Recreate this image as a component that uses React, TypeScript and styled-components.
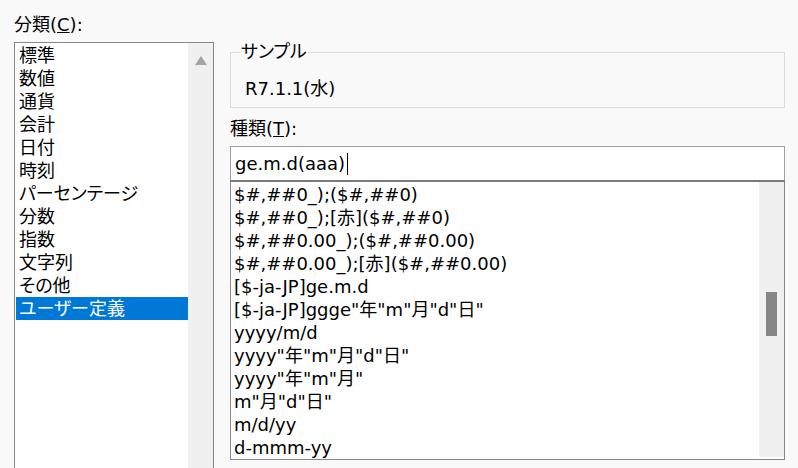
import styled, { createGlobalStyle } from 'styled-components'

const GlobalStyle = createGlobalStyle`
  html, body {
    margin: 0;
    padding: 0;
    background: #f9f9f9;
    width: 798px;
    height: 468px;
    overflow: hidden;
  }
  body {
    font-family: "DejaVu Sans", "Noto Sans CJK JP", sans-serif;
    font-feature-settings: "palt";
    font-size: 18px;
    color: #000;
  }
`

const categories = [
  '標準',
  '数値',
  '通貨',
  '会計',
  '日付',
  '時刻',
  'パーセンテージ',
  '分数',
  '指数',
  '文字列',
  'その他',
  'ユーザー定義',
]

const formats = [
  '$#,##0_);($#,##0)',
  '$#,##0_);[赤]($#,##0)',
  '$#,##0.00_);($#,##0.00)',
  '$#,##0.00_);[赤]($#,##0.00)',
  '[$-ja-JP]ge.m.d',
  '[$-ja-JP]ggge"年"m"月"d"日"',
  'yyyy/m/d',
  'yyyy"年"m"月"d"日"',
  'yyyy"年"m"月"',
  'm"月"d"日"',
  'm/d/yy',
  'd-mmm-yy',
]

export default function App() {
  return (
    <>
      <GlobalStyle />
      <Page>
        <LeftColumn>
          <Label>
            分類(<u>C</u>):
          </Label>
          <CategoryBox>
            <Items>
              {categories.map((c, i) => (
                <CategoryItem key={c} $selected={i === categories.length - 1}>
                  {c}
                </CategoryItem>
              ))}
            </Items>
            <ScrollTrack>
              <UpArrow viewBox="0 0 12 9" width="12" height="9">
                <polygon points="6,0 12,9 0,9" fill="#a3a3a3" />
              </UpArrow>
            </ScrollTrack>
          </CategoryBox>
        </LeftColumn>

        <RightColumn>
          <SampleGroup>
            <Legend>サンプル</Legend>
            <SampleText>R7.1.1(水)</SampleText>
          </SampleGroup>
          <TypeLabel>
            種類(<u>T</u>):
          </TypeLabel>
          <FormatInput>
            ge.m.d(aaa)
            <Caret />
          </FormatInput>
          <FormatBox>
            <Items>
              {formats.map((f) => (
                <FormatItem key={f}>{f}</FormatItem>
              ))}
            </Items>
            <FormatTrack>
              <Thumb />
            </FormatTrack>
          </FormatBox>
        </RightColumn>
      </Page>
    </>
  )
}

const Page = styled.div`
  display: grid;
  grid-template-columns: 200px 555px;
  column-gap: 16px;
  padding: 0 0 0 14px;
  height: 468px;
  box-sizing: border-box;
`

const LeftColumn = styled.div`
  display: flex;
  flex-direction: column;
`

const Label = styled.div`
  line-height: 22px;
  margin-top: 14px;
  margin-bottom: 6px;
  white-space: nowrap;
`

const CategoryBox = styled.div`
  display: flex;
  border: 1px solid #828790;
  border-bottom: none;
  background: #fff;
  height: 440px;
  box-sizing: border-box;
  padding: 1px 0 0 1px;
`

const Items = styled.div`
  flex: 1;
  display: flex;
  flex-direction: column;
  min-width: 0;
`

const CategoryItem = styled.div<{ $selected?: boolean }>`
  height: 23px;
  line-height: 23px;
  padding-left: 3px;
  white-space: nowrap;
  background: ${(p) => (p.$selected ? '#0078d7' : 'transparent')};
  color: ${(p) => (p.$selected ? '#fff' : '#000')};
`

const ScrollTrack = styled.div`
  width: 25px;
  background: #f0f0f0;
  display: flex;
  justify-content: center;
  align-items: flex-start;
  margin-top: -1px;
`

const UpArrow = styled.svg`
  margin-top: 13px;
  margin-left: 1px;
`

const RightColumn = styled.div`
  display: flex;
  flex-direction: column;
`

const SampleGroup = styled.fieldset`
  margin: 41px 0 0 0;
  border: 1px solid #dcdcdc;
  padding: 15px 14px 7px 14px;
  min-width: 0;
`

const Legend = styled.legend`
  line-height: 22px;
  padding: 0 1px;
  margin-left: -5px;
`

const SampleText = styled.div`
  line-height: 22px;
`

const TypeLabel = styled.div`
  line-height: 22px;
  margin-top: 10px;
  margin-bottom: 6px;
`

const FormatInput = styled.div`
  display: flex;
  align-items: center;
  height: 34px;
  box-sizing: border-box;
  border: 1px solid #a0a0a0;
  border-bottom: none;
  background: #fff;
  padding-left: 4px;
`

const Caret = styled.span`
  display: inline-block;
  width: 1px;
  height: 22px;
  background: #000;
  margin-left: 2px;
`

const FormatBox = styled.div`
  display: flex;
  height: 280px;
  box-sizing: border-box;
  border: 1px solid #828790;
  border-top: 2px solid #7a7a7a;
  background: #fff;
  padding: 1px 0 2px 3px;
`

const FormatItem = styled.div`
  height: 23px;
  line-height: 23px;
  white-space: nowrap;
`

const FormatTrack = styled.div`
  width: 25px;
  margin-top: -1px;
  margin-bottom: 0;
  background: #f0f0f0;
  position: relative;
`

const Thumb = styled.div`
  position: absolute;
  left: 7px;
  top: 110px;
  width: 11px;
  height: 44px;
  background: #858585;
`
